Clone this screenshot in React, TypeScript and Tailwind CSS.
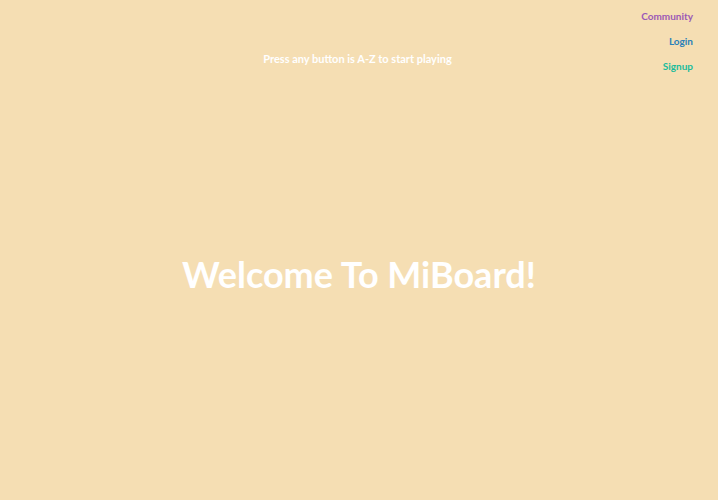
import React from "react";

export default function App() {
  return (
    <div
      className="w-[718px] h-[500px] bg-[#f5deb3] flex flex-col"
      style={{ fontFamily: "Lato, 'Open Sans', sans-serif" }}
    >
      <header className="grid grid-cols-[1fr_auto_1fr] pl-[22px] pr-[25px] pt-[10px]">
        <div />
        <p className="mt-[42px] text-white font-bold text-[11px] leading-[13px] whitespace-nowrap">
          Press any button is A-Z to start playing
        </p>
        <nav className="justify-self-end flex flex-col items-end gap-[13px] text-[10px] font-bold leading-[12px]">
          <a className="text-[#9b59b6]">Community</a>
          <a className="text-[#2980b9]">Login</a>
          <a className="text-[#1abc9c]">Signup</a>
        </nav>
      </header>
      <main className="flex justify-center pt-[180px]">
        <h1 className="text-white font-bold text-[36px] leading-[44px] whitespace-nowrap">
          Welcome To MiBoard!
        </h1>
      </main>
    </div>
  );
}
